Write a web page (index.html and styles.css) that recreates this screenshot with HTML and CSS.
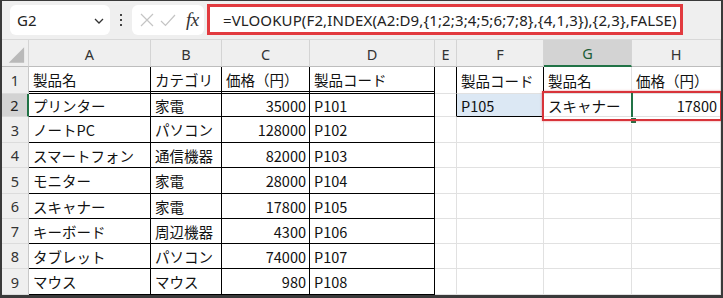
FILE: index.html
```html
<!DOCTYPE html>
<html lang="ja">
<head>
<meta charset="utf-8">
<title>Excel</title>
<link rel="stylesheet" href="styles.css">
</head>
<body>
<div class="app">
  <div class="toolbar">
    <div class="namebox">
      <span class="nb-text">G2</span>
      <svg class="chev" width="10" height="6" viewBox="0 0 10 6"><polyline points="1,1 5,5 9,1" fill="none" stroke="#333" stroke-width="1.3"/></svg>
    </div>
    <div class="dots"><i></i><i></i><i></i></div>
    <div class="fxbox">
      <svg width="14" height="14" viewBox="0 0 14 14"><path d="M1 1 L13 13 M13 1 L1 13" stroke="#c4c4c4" stroke-width="1.2" fill="none"/></svg>
      <svg width="16" height="13" viewBox="0 0 16 13"><polyline points="1,7 5.5,11.5 15,1" stroke="#c4c4c4" stroke-width="1.2" fill="none"/></svg>
      <span class="fx">fx</span>
    </div>
    <div class="formula">=VLOOKUP(F2,INDEX(A2:D9,{1;2;3;4;5;6;7;8},{4,1,3}),{2,3},FALSE)</div>
  </div>
  <div class="sheet">
    <div class="hd corner"><svg width="27" height="26" viewBox="0 0 27 26"><polygon points="23,7 23,23 7,23" fill="#b9b9b9"/></svg></div>
    <div class="hd">A</div>
    <div class="hd">B</div>
    <div class="hd">C</div>
    <div class="hd">D</div>
    <div class="hd">E</div>
    <div class="hd">F</div>
    <div class="hd sel-col">G</div>
    <div class="hd">H</div>

    <div class="rh">1</div>
    <div class="c b dbl">製品名</div>
    <div class="c b dbl">カテゴリ</div>
    <div class="c b dbl">価格（円）</div>
    <div class="c b dbl">製品コード</div>
    <div class="c br"></div>
    <div class="c br">製品コード</div>
    <div class="c">製品名</div>
    <div class="c">価格（円）</div>

    <div class="rh sel-row">2</div>
    <div class="c b">プリンター</div>
    <div class="c b">家電</div>
    <div class="c b n">35000</div>
    <div class="c b">P101</div>
    <div class="c br"></div>
    <div class="c b blue">P105</div>
    <div class="c">スキャナー</div>
    <div class="c n">17800</div>

    <div class="rh">3</div>
    <div class="c b">ノートPC</div>
    <div class="c b">パソコン</div>
    <div class="c b n">128000</div>
    <div class="c b">P102</div>
    <div class="c"></div><div class="c"></div><div class="c"></div><div class="c"></div>

    <div class="rh">4</div>
    <div class="c b">スマートフォン</div>
    <div class="c b">通信機器</div>
    <div class="c b n">82000</div>
    <div class="c b">P103</div>
    <div class="c"></div><div class="c"></div><div class="c"></div><div class="c"></div>

    <div class="rh">5</div>
    <div class="c b">モニター</div>
    <div class="c b">家電</div>
    <div class="c b n">28000</div>
    <div class="c b">P104</div>
    <div class="c"></div><div class="c"></div><div class="c"></div><div class="c"></div>

    <div class="rh">6</div>
    <div class="c b">スキャナー</div>
    <div class="c b">家電</div>
    <div class="c b n">17800</div>
    <div class="c b">P105</div>
    <div class="c"></div><div class="c"></div><div class="c"></div><div class="c"></div>

    <div class="rh">7</div>
    <div class="c b">キーボード</div>
    <div class="c b">周辺機器</div>
    <div class="c b n">4300</div>
    <div class="c b">P106</div>
    <div class="c"></div><div class="c"></div><div class="c"></div><div class="c"></div>

    <div class="rh">8</div>
    <div class="c b">タブレット</div>
    <div class="c b">パソコン</div>
    <div class="c b n">74000</div>
    <div class="c b">P107</div>
    <div class="c"></div><div class="c"></div><div class="c"></div><div class="c"></div>

    <div class="rh">9</div>
    <div class="c b">マウス</div>
    <div class="c b">マウス</div>
    <div class="c b n">980</div>
    <div class="c b">P108</div>
    <div class="c"></div><div class="c"></div><div class="c"></div><div class="c"></div>

    <div class="active-edge"></div>
    <div class="fill-handle"></div>
    <div class="redbox"></div>
  </div>
</div>
</body>
</html>
```

FILE: styles.css
```css
html, body {
  margin: 0;
  padding: 0;
  background: #3a3a3a;
}
body {
  width: 723px;
  height: 298px;
  overflow: hidden;
}
.app {
  margin: 1px 2px 3px 2px;
  width: 719px;
  height: 294px;
  background: #efefef;
  display: flex;
  flex-direction: column;
  overflow: hidden;
}
.toolbar {
  height: 39px;
  box-sizing: border-box;
  display: flex;
  align-items: flex-start;
  padding: 4px 0 0 8px;
  border-bottom: 1px solid #d8d8d8;
}
.namebox {
  width: 100px;
  height: 30px;
  background: #fff;
  border-radius: 6px;
  display: flex;
  align-items: center;
  justify-content: space-between;
  padding: 0 6px 0 7px;
  box-sizing: border-box;
}
.nb-text {
  font-family: "Noto Sans", sans-serif;
  font-size: 15px;
  color: #222;
}
.chev { margin-top: 1px; }
.dots {
  width: 22px;
  height: 30px;
  display: flex;
  flex-direction: column;
  align-items: center;
  justify-content: center;
  gap: 3px;
}
.dots i {
  display: block;
  width: 2px;
  height: 2px;
  background: #444;
}
.fxbox {
  width: 72px;
  height: 30px;
  background: #fff;
  border-radius: 6px;
  display: flex;
  align-items: center;
  padding-left: 8px;
  box-sizing: border-box;
  gap: 6px;
}
.fx {
  font-family: "Liberation Serif", serif;
  font-style: italic;
  font-size: 19px;
  color: #333;
  margin-left: 4px;
  letter-spacing: -0.5px;
}
.formula {
  margin-left: 3px;
  margin-top: -1px;
  width: 476px;
  height: 31px;
  box-sizing: border-box;
  border: 3px solid #e23a3f;
  background: #fff;
  padding-left: 13px;
  display: flex;
  align-items: center;
  font-family: "Noto Sans", sans-serif;
  font-size: 15px;
  letter-spacing: 0.12px;
  color: #222;
  white-space: nowrap;
}
.sheet {
  position: relative;
  display: grid;
  grid-template-columns: 27px 122px 71px 88px 125px 22px 87px 88px 89px;
  grid-template-rows: 27px 27px 23px 26px 25px 26px 25px 25px 25px 26px;
  background: #fff;
}
.hd {
  background: #efefef;
  border-right: 1px solid #d4d4d4;
  border-bottom: 1px solid #bdbdbd;
  box-sizing: border-box;
  display: flex;
  align-items: center;
  justify-content: center;
  font-family: "Noto Sans", sans-serif;
  font-size: 14.5px;
  color: #333;
  padding-top: 1px;
}
.corner {
  position: relative;
  padding: 0;
  align-items: stretch;
  justify-content: stretch;
}
.sel-col {
  background: #d3d3d3;
  color: #1d5e37;
  border-bottom: 2px solid #217346;
}
.rh {
  background: #efefef;
  border-right: 1px solid #c8c8c8;
  border-bottom: 1px solid #dcdcdc;
  box-sizing: border-box;
  display: flex;
  align-items: center;
  justify-content: center;
  font-family: "Noto Sans", sans-serif;
  font-size: 14.5px;
  color: #333;
}
.sel-row {
  background: #d3d3d3;
  border-right: 2px solid #217346;
  color: #222;
}
.c {
  border-right: 1px solid #e1e1e1;
  border-bottom: 1px solid #e1e1e1;
  box-sizing: border-box;
  display: flex;
  align-items: center;
  padding: 0 3px 0 4px;
  font-family: "Noto Sans CJK JP", sans-serif;
  font-size: 14.5px;
  color: #111;
  white-space: nowrap;
  overflow: hidden;
}
.b {
  border-right-color: #000;
  border-bottom-color: #000;
}
.br {
  border-right-color: #000;
}
.dbl {
  border-bottom: 3px double #000;
}
.n {
  justify-content: flex-end;
}
.blue {
  background: #dce8f4;
}
.redbox {
  position: absolute;
  left: 540px;
  top: 51px;
  width: 180px;
  height: 30px;
  box-sizing: border-box;
  border: 2px solid #d8343a;
  box-shadow: 0 0 2px rgba(216, 52, 58, 0.55);
  pointer-events: none;
}
.active-edge {
  position: absolute;
  left: 629px;
  top: 53px;
  width: 2px;
  height: 25px;
  background: #217346;
}
.fill-handle {
  position: absolute;
  left: 628px;
  top: 77px;
  width: 5px;
  height: 5px;
  background: #217346;
  border: 1px solid #fff;
  box-sizing: content-box;
}
```
